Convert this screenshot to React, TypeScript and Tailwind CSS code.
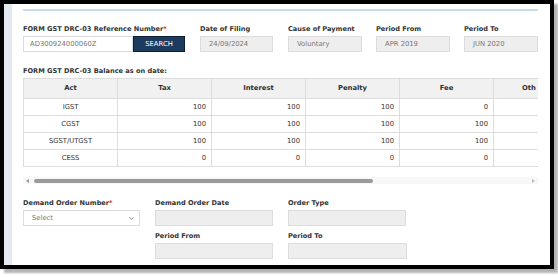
import { ChevronDown } from "lucide-react";

const balances = [
  { act: "IGST", tax: "100", interest: "100", penalty: "100", fee: "0" },
  { act: "CGST", tax: "100", interest: "100", penalty: "100", fee: "100" },
  { act: "SGST/UTGST", tax: "100", interest: "100", penalty: "100", fee: "100" },
  { act: "CESS", tax: "0", interest: "0", penalty: "0", fee: "0" },
];

const columns = ["Act", "Tax", "Interest", "Penalty", "Fee"];

const Label = ({ text, required }: { text: string; required?: boolean }) => (
  <p className="h-[10px] whitespace-nowrap text-[6.6px] font-bold leading-[10px] text-[#333]">
    {text}
    {required && <span className="text-[#d9182d]">*</span>}
  </p>
);

const ReadOnly = ({ value, className }: { value?: string; className: string }) => (
  <div
    className={`mt-[2px] flex h-[16px] items-center border border-[#dcdcdc] bg-[#eeeeee] px-[8px] text-[6.8px] text-[#777] ${className}`}
  >
    {value}
  </div>
);

export default function App() {
  return (
    <div className="h-[277px] w-[558px] overflow-hidden bg-white font-['DejaVu_Sans',sans-serif]">
      <div className="flex h-[269px] w-[554px] border-4 border-black shadow-[4px_4px_2px_rgba(0,0,0,0.3)]">
        <div className="w-[8px] bg-[#e4e9ef]" />
        <div className="flex-1 overflow-hidden pl-[11px] pr-[12px] pt-[5px]">
          <div className="h-[2px] bg-[#c8dcef]" />

          <div className="mt-[13px] flex">
            <div className="w-[162px]">
              <Label text="FORM GST DRC-03 Reference Number" required />
              <div className="mt-[2px] flex h-[16px]">
                <div className="flex w-[110px] items-center border border-[#dcdcdc] bg-white px-[6px] text-[6.8px] text-[#777]">
                  AD300924000060Z
                </div>
                <button
                  type="button"
                  className="w-[52px] border border-[#0d1f33] bg-[#1c3b5f] text-[6.8px] text-white"
                >
                  SEARCH
                </button>
              </div>
            </div>
            <div className="ml-[15px] w-[73px]">
              <Label text="Date of Filing" />
              <ReadOnly value="24/09/2024" className="w-[73px]" />
            </div>
            <div className="ml-[15px] w-[74px]">
              <Label text="Cause of Payment" />
              <ReadOnly value="Voluntary" className="w-[74px]" />
            </div>
            <div className="ml-[14px] w-[74px]">
              <Label text="Period From" />
              <ReadOnly value="APR 2019" className="w-[74px]" />
            </div>
            <div className="ml-[14px] w-[74px]">
              <Label text="Period To" />
              <ReadOnly value="JUN 2020" className="w-[74px]" />
            </div>
          </div>

          <div className="mt-[14px]">
            <Label text="FORM GST DRC-03 Balance as on date:" />
          </div>
          <div className="mt-[2px] w-[515px] overflow-hidden">
            <table className="w-[515px] table-fixed border-collapse text-[6.8px] text-[#333]">
              <thead>
                <tr className="h-[20px] bg-[#f1f1f1]">
                  {columns.map((c) => (
                    <th key={c} className="w-[94px] border border-[#dddddd] font-bold">
                      {c}
                    </th>
                  ))}
                  <th className="border-y border-l border-[#dddddd] pl-[28px] text-left font-bold">
                    Oth
                  </th>
                </tr>
              </thead>
              <tbody>
                {balances.map((b) => (
                  <tr key={b.act} className="h-[17px]">
                    <td className="border border-[#dddddd] text-center">{b.act}</td>
                    <td className="border border-[#dddddd] pr-[5px] text-right">{b.tax}</td>
                    <td className="border border-[#dddddd] pr-[5px] text-right">{b.interest}</td>
                    <td className="border border-[#dddddd] pr-[5px] text-right">{b.penalty}</td>
                    <td className="border border-[#dddddd] pr-[5px] text-right">{b.fee}</td>
                    <td className="border-y border-l border-[#dddddd]" />
                  </tr>
                ))}
              </tbody>
            </table>
          </div>

          <div className="mt-[10px] flex h-[7px] items-center bg-[#f7f7f7] px-[3px]">
            <span className="h-0 w-0 border-y-[2px] border-r-[3px] border-y-transparent border-r-[#999]" />
            <div className="ml-[5px] h-[4px] w-[339px] rounded-full bg-[#9a9a9a]" />
            <div className="flex-1" />
            <span className="h-0 w-0 border-y-[2px] border-l-[3px] border-y-transparent border-l-[#bbb]" />
          </div>

          <div className="mt-[14px] grid grid-cols-[117px_118px_118px] gap-x-[15px] gap-y-[5px]">
            <div>
              <Label text="Demand Order Number" required />
              <div className="mt-[2px] flex h-[16px] items-center justify-between border border-[#dcdcdc] bg-white pl-[8px] pr-[4px] text-[6.8px] text-[#777]">
                <span>Select</span>
                <ChevronDown className="h-[7px] w-[7px]" strokeWidth={3} />
              </div>
            </div>
            <div>
              <Label text="Demand Order Date" />
              <ReadOnly className="w-[118px]" />
            </div>
            <div>
              <Label text="Order Type" />
              <ReadOnly className="w-[118px]" />
            </div>
            <div />
            <div>
              <Label text="Period From" />
              <ReadOnly className="w-[118px]" />
            </div>
            <div>
              <Label text="Period To" />
              <ReadOnly className="w-[119px]" />
            </div>
          </div>
        </div>
      </div>
    </div>
  );
}
